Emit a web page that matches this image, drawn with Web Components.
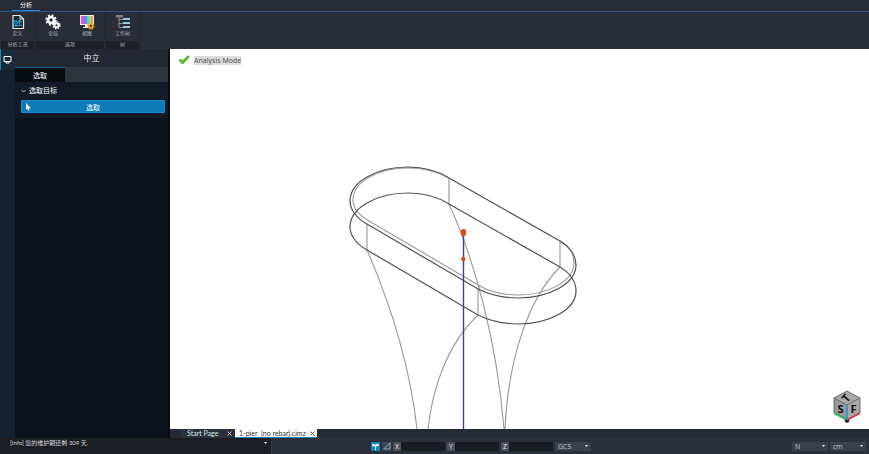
<!DOCTYPE html>
<html lang="zh-CN">
<head>
<meta charset="utf-8">
<title>分析</title>
<style>
html,body{margin:0;height:100%}
body{font-family:"Open Sans","Noto Sans CJK SC",sans-serif;font-size:6px;color:#d5d9df;background:#262b36}
</style>
</head>
<body>
<cim-app></cim-app>
<script>
const define = (name, html, setup) => {
  const t = document.createElement('template');
  t.innerHTML = `<style>*{box-sizing:border-box}button,input,select{font:inherit;color:inherit;margin:0;padding:0;border:0;border-radius:0;background:none}svg{display:block}</style>` + html;
  customElements.define(name, class extends HTMLElement {
    constructor(){ super(); this.attachShadow({mode:'open'}).append(t.content.cloneNode(true)); }
    connectedCallback(){ if (setup) setup(this, this.shadowRoot); }
  });
};

define('ribbon-tool', `<style>
:host{display:block;flex:1}
button{display:flex;flex-direction:column;align-items:center;width:100%;padding-top:2px;font-size:5px;line-height:7px;color:#b3b8c0}
</style><button><slot name="icon"></slot><slot></slot></button>`);

define('ribbon-group', `<style>
:host{display:flex;flex-direction:column;width:var(--w,35px);padding-right:1px;border-right:1px solid #20242d}
.tools{display:flex;flex:1}
.label{height:8px;font-size:5px;line-height:7px;background:#1d2027;color:#a9aeb6;text-align:center}
</style><div class="tools"><slot></slot></div><div class="label"></div>`,
(h,r)=>{ r.querySelector('.label').textContent = h.getAttribute('label'); });

define('app-ribbon', `<style>
:host{display:block;background:#292d37}
nav{height:12px;padding-left:12px;border-bottom:1px solid #2b5487;background:#272b35}
nav button{display:block;height:11px;width:28px;line-height:11px;color:#fff;border-bottom:1px solid #2a83d0}
.groups{display:flex;height:37px;padding-left:1px}
svg{width:16px;height:16px}
</style>
<nav><button>分析</button></nav>
<div class="groups">
<ribbon-group label="分析工况">
 <ribbon-tool><svg slot="icon" viewBox="0 0 16 16"><path d="M3 1.5h7l3.500 3.500v9.500H3z" fill="#20252e" stroke="#e4e7ea" stroke-width="1.200"/><path d="M10 1.500V5h3.500" fill="none" stroke="#e4e7ea"/><path d="M4 10V8.500l2-2 1.500 2.500L10 6v2l2-.5M4 11.500h8M6 9v4M9.500 8v4" fill="none" stroke="#16a0d4" stroke-width="1.200"/></svg>定义</ribbon-tool>
</ribbon-group>
<ribbon-group label="选项" style="--w:70px">
 <ribbon-tool><svg slot="icon" viewBox="0 0 16 16"><g fill="none" stroke="#fff"><circle cx="6" cy="6" r="3" stroke-width="2.600"/><circle cx="6" cy="6" r="4.700" stroke-width="2" stroke-dasharray="1.850 1.850"/><circle cx="11.500" cy="11.300" r="2.100" stroke-width="1.900"/><circle cx="11.500" cy="11.300" r="3.400" stroke-width="1.600" stroke-dasharray="1.340 1.340"/></g></svg>全局</ribbon-tool>
 <ribbon-tool><svg slot="icon" viewBox="0 0 16 16"><path d="M1 1h14v10H1zM6 11h3v2H6zM4 13h7v1H4z" fill="#eceef0"/><path d="M2 2h2v8H2z" fill="#f056a9"/><path d="M4 2h2v8H4z" fill="#bb5cf4"/><path d="M6 2h2v8H6z" fill="#4b98ff"/><path d="M8 2h2v8H8z" fill="#43e2a6"/><path d="M10 2h2v8h-2z" fill="#99eb55"/><path d="M12 2h2v8h-2z" fill="#ff8874"/><circle cx="11.800" cy="12" r="2" fill="#3c3322" stroke="#f5a61c" stroke-width="1.700"/><circle cx="11.800" cy="12" r="3.200" fill="none" stroke="#f5a61c" stroke-width="1.200" stroke-dasharray="1.250 1.250"/></svg>视图</ribbon-tool>
</ribbon-group>
<ribbon-group label="树">
 <ribbon-tool><svg slot="icon" viewBox="0 0 16 16"><path d="M1 1h7v2.500H1z" fill="#7b7e84"/><path d="M4 3.500v10h4M4 5.500h4M4 9.500h4" fill="none" stroke="#8a8e94"/><path d="M8 4h7v2H8zM8 8h7v2H8zM8 12h7v2H8z" fill="#9bc5df"/></svg>工作树</ribbon-tool>
</ribbon-group>
</div>`);

define('side-panel', `<style>
:host{display:grid;grid-template-columns:15px 1fr;background:#0c131e;border-right:2px solid #070c14;font-size:7px}
.rail{background:#142130}
.rail button{display:grid;place-items:center;width:15px;height:21px;box-shadow:inset 1px 0 #1581b8;background:#19293a}
h1{margin:0;height:18px;font-size:8px;line-height:18px;font-weight:400;text-align:center;color:#f0f2f4;background:#222731}
.tabs{display:flex;height:15px;background:#2d333f}
.tabs button{width:50px;background:#080c13;border-top:1px solid #185f91;color:#fff}
section{padding:4px 3px 5px 6px;background:#121c29;color:#fff}
h2{display:flex;align-items:center;gap:3px;margin:0 0 4px;font-size:7px;line-height:10px;font-weight:400}
.pick{display:grid;grid-template-columns:12px 1fr 12px;align-items:center;width:100%;height:13px;border:1px solid #168aca;border-radius:1px;background:#0c7bb6}
</style>
<div class="rail"><button aria-label="面板"><svg width="9" height="9" viewBox="0 0 9 9"><path d="M1 1.500h7v5H1zM3 6.500v1.500h3V6.500" fill="none" stroke="#fff"/></svg></button></div>
<div><h1>中立</h1>
<div class="tabs"><button>选取</button></div>
<section><h2><svg width="5" height="4" viewBox="0 0 5 4"><path d="M.5 1l2 2 2-2" fill="none" stroke="#aeb5be"/></svg>选取目标</h2>
<button class="pick"><svg width="12" height="8" viewBox="0 0 12 8"><path d="M4 0v7l1.500-1.400.9 2.100 1.200-.5-.9-2H9z" fill="#fff"/></svg><span>选取</span></button></section></div>`);

define('model-view', `<style>
:host{display:grid;position:relative;min-height:0;min-width:0;background:#fff;overflow:hidden}
.scene{width:100%;height:100%;min-height:0;position:absolute;inset:0}
.mode{position:absolute;left:8px;top:6px;display:flex;align-items:center;gap:4px;font:7px/9px "Noto Sans",sans-serif;color:#555}
.mode span{background:#dcdcdc}
.cube{position:absolute;right:8px;bottom:5px}
text{font-family:"Open Sans",sans-serif;font-weight:700;font-size:11px;fill:#111;text-anchor:middle}
</style>
<svg class="scene" viewBox="170 49 699 380" fill="none">
<g stroke="#999" stroke-width="1.100">
<path d="M449 178V204M367 224V250M560 241V267M478 315V289L480 285"/>
<path d="M449 204C475 261 497 342 504 429M367 250C390 303 410 367 417 429M478 315C450 341 433 383 428 429M560 267C528 299 508 360 505 429"/>
<path d="M449 178C438 172 423 168 408 168A55 32 0 0 0 353 200C353 208 359 215 369 221L480 286C490 292 504 295 518 295A56 32 0 0 0 574 263C574 254 569 246 560 241"/></g>
<g stroke="#505050" stroke-width="1.200">
<path d="M449 178C438 171 423 167 408 167A58 34 0 0 0 350 201C350 209 356 218 367 224L478 289C490 295 504 298 518 298A58 33 0 0 0 576 265C576 256 570 247 560 241Z"/>
<path d="M449 204C438 197 423 193 408 193A58 34 0 0 0 350 227C350 235 356 244 367 250L478 315C490 321 504 324 518 324A58 33 0 0 0 576 291C576 282 570 273 560 267Z"/></g>
<path d="M463.500 232V429" stroke="#3b3cb8" stroke-width="1.400"/>
<rect x="461" y="229" width="5" height="7" rx="2" fill="#e9450f"/><circle cx="463.300" cy="259" r="2.200" fill="#e9450f"/>
</svg>
<div class="mode"><svg width="12" height="10" viewBox="0 0 12 10"><path d="M1 5.500L2.500 4l2 2L10 .8 11.300 2 4.700 9z" fill="#5bce21" stroke="#35911c" stroke-width=".8"/></svg><span>Analysis Mode</span></div>
<svg class="cube" width="28" height="34" viewBox="0 0 28 34">
<path d="M14 1L27 8 14 15 1 8z" fill="#aaa"/><path d="M1 8l13 7v15L1 23z" fill="#989898"/><path d="M27 8l-13 7v15l13-7z" fill="#a8a8a8"/><path d="M14 1L27 8v15L14 30 1 23V8zM1 8l13 7 13-7" fill="none" stroke="#555" stroke-width=".8"/>
<circle cx="14" cy="30.500" r="2.300" fill="#222"/><path d="M14 15v15" stroke="#189bdf" stroke-width="1.600"/><path d="M1 23l12 6.500" stroke="#1bb845" stroke-width="1.600"/><path d="M27 23l-12 6.500" stroke="#df3039" stroke-width="1.600"/>
<text x="7.500" y="23">S</text><text x="20.500" y="23">F</text><text transform="translate(13 8) rotate(-50)" x="0" y="4">T</text></svg>`);

define('document-tabs', `<style>
:host{display:flex;height:9px;background:#252b36;font:7px/9px Lato,"Noto Sans CJK SC",sans-serif;padding-left:11px;gap:1px}
div{display:flex;align-items:center;height:9px;white-space:nowrap;color:#dde1e6;background:#2a313d}
button{line-height:9px}
div button:first-child{padding-left:6px}
div button:last-child{width:9px;margin-left:auto;display:grid;place-items:center}
.start{width:53px}
.file{width:82px;background:#fff;color:#333;border-bottom:1px solid #1581b8}
.file button:first-child{padding-left:4px}
</style>
<div class="start"><button>Start Page</button><button aria-label="关闭"><svg width="5" height="5" viewBox="0 0 5 5"><path d="M.5.5l4 4m0-4l-4 4" stroke="#c5cad2"/></svg></button></div>
<div class="file"><button>1-pier&nbsp; (no rebar).cimz</button><button aria-label="关闭"><svg width="5" height="5" viewBox="0 0 5 5"><path d="M.5.5l4 4m0-4l-4 4" stroke="#555"/></svg></button></div>`);

define('coord-field', `<style>
:host{display:flex;height:9px;width:52px}
label{width:8px;font-size:7px;line-height:9px;text-align:center;background:#4a4f5a;color:#eee}
input{flex:1;min-width:0;background:#191c22}
</style><label for="v"></label><input id="v">`,
(h,r)=>{ r.querySelector('label').textContent = h.getAttribute('axis'); });

define('unit-select', `<style>
:host{display:flex;align-items:center;height:9px;width:36px;background:#3a404c;color:#c7cbd2;font-size:7px}
select{appearance:none;width:100%;height:9px;line-height:9px;padding-left:3px;outline:0}
svg{flex:none;margin:0 3px 0 -6px;pointer-events:none}
</style><select></select><svg width="3" height="2" viewBox="0 0 3 2"><path d="M0 0h3L1.500 2z" fill="#eee"/></svg>`,
(h,r)=>{ const s=r.querySelector('select'); s.setAttribute('aria-label',h.getAttribute('label')); s.replaceChildren(new Option(h.getAttribute('value'))); });

define('status-bar', `<style>
:host{display:grid;grid-template-columns:271px 1fr;height:16px;background:#2a303b}
.info{display:flex;justify-content:space-between;padding:0 4px 0 10px;font-family:Lato,"Noto Sans CJK SC",sans-serif;line-height:9px;background:#1d1e23;color:#d4d6da}
.info button{height:10px;display:grid;place-items:center}
.tools{display:flex;align-items:center;padding:0 3px 0 99px;gap:2px;border-left:1px solid #343b47}
.sq{display:grid;place-items:center;width:9px;height:9px;background:#3b4652}
.on{background:#1581b8}
.push{margin-left:auto}
</style>
<div class="info"><span>[Info] 您的维护期还剩 309 天.</span><button aria-label="展开"><svg width="3" height="2" viewBox="0 0 3 2"><path d="M0 0h3L1.500 2z" fill="#fff"/></svg></button></div>
<div class="tools"><button class="sq on" aria-label="捕捉"><svg width="7" height="7" viewBox="0 0 7 7"><path d="M1.300 2h4M3.500 2.500V7" stroke="#fff"/><circle cx="1.300" cy="2" r="1.200" fill="#fff"/><circle cx="5.500" cy="2" r="1.200" fill="#fff"/><circle cx="3.500" cy="3.500" r="1" fill="#fff"/></svg></button>
<button class="sq" aria-label="平面"><svg width="8" height="8" viewBox="0 0 8 8"><path d="M.8 7L7 .8V7z" fill="none" stroke="#8fb1c9" stroke-width=".9"/></svg></button>
<coord-field axis="X"></coord-field><coord-field axis="Y"></coord-field><coord-field axis="Z"></coord-field>
<unit-select label="坐标系" value="GCS"></unit-select>
<unit-select class="push" label="力" value="N"></unit-select><unit-select label="长度" value="cm"></unit-select></div>`);

define('cim-app', `<style>
:host{display:grid;grid-template-rows:auto 1fr auto;min-height:100vh}
main{display:grid;grid-template-columns:170px 1fr;min-height:0}
.work{display:grid;grid-template-rows:1fr auto;min-width:0}
</style>
<app-ribbon></app-ribbon>
<main><side-panel></side-panel><div class="work"><model-view></model-view><document-tabs></document-tabs></div></main>
<status-bar></status-bar>`);
</script>
</body>
</html>
